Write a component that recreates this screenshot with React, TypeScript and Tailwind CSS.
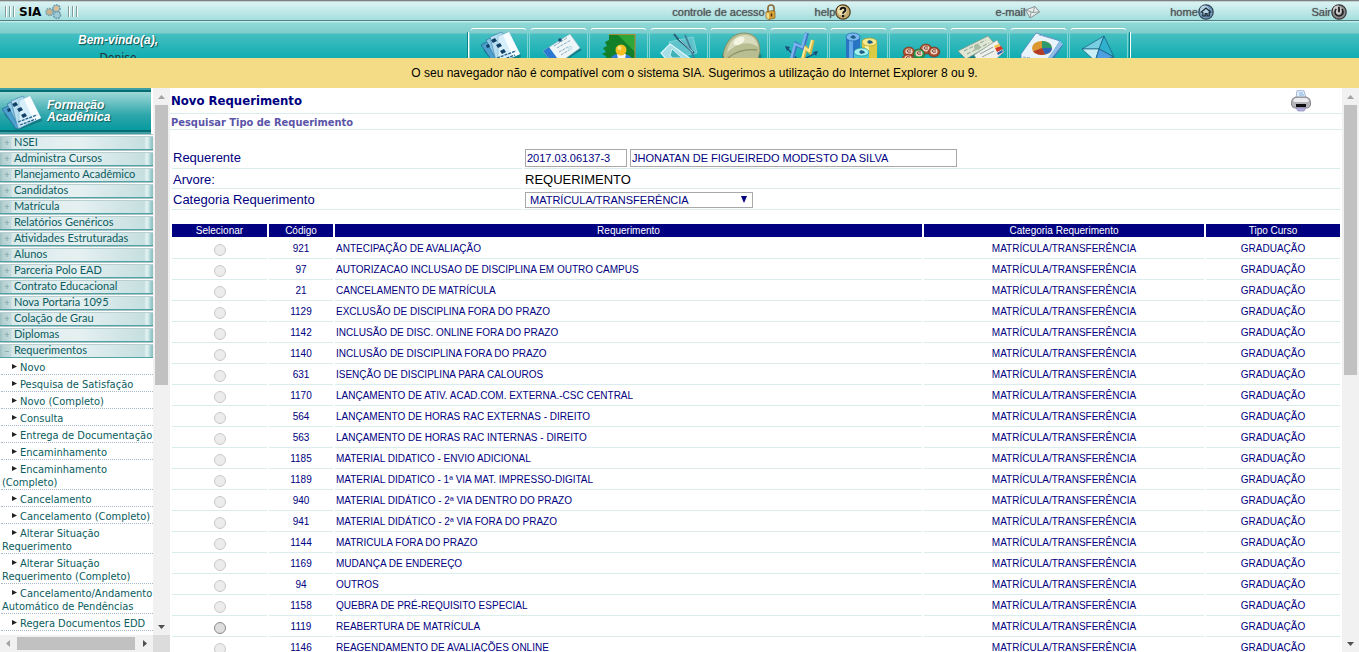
import React from "react";

const MODULES = [
  "Acadêmico",
  "Cadastro",
  "Docente",
  "Projetos",
  "Segurança",
  "Indicadores",
  "Dados",
  "Comunidade",
  "Financeiro",
  "Relatórios",
  "Geral",
];

const MENU = [
  "NSEI",
  "Administra Cursos",
  "Planejamento Acadêmico",
  "Candidatos",
  "Matrícula",
  "Relatórios Genéricos",
  "Atividades Estruturadas",
  "Alunos",
  "Parceria Polo EAD",
  "Contrato Educacional",
  "Nova Portaria 1095",
  "Colação de Grau",
  "Diplomas",
  "Requerimentos",
];

const SUBMENU = [
  "Novo",
  "Pesquisa de Satisfação",
  "Novo (Completo)",
  "Consulta",
  "Entrega de Documentação",
  "Encaminhamento",
  "Encaminhamento (Completo)",
  "Cancelamento",
  "Cancelamento (Completo)",
  "Alterar Situação Requerimento",
  "Alterar Situação Requerimento (Completo)",
  "Cancelamento/Andamento Automático de Pendências",
  "Regera Documentos EDD",
];

const ROWS: { code: string; name: string; enabled?: boolean }[] = [
  { code: "921", name: "ANTECIPAÇÃO DE AVALIAÇÃO" },
  { code: "97", name: "AUTORIZACAO INCLUSAO DE DISCIPLINA EM OUTRO CAMPUS" },
  { code: "21", name: "CANCELAMENTO DE MATRÍCULA" },
  { code: "1129", name: "EXCLUSÃO DE DISCIPLINA FORA DO PRAZO" },
  { code: "1142", name: "INCLUSÃO DE DISC. ONLINE FORA DO PRAZO" },
  { code: "1140", name: "INCLUSÃO DE DISCIPLINA FORA DO PRAZO" },
  { code: "631", name: "ISENÇÃO DE DISCIPLINA PARA CALOUROS" },
  { code: "1170", name: "LANÇAMENTO DE ATIV. ACAD.COM. EXTERNA.-CSC CENTRAL" },
  { code: "564", name: "LANÇAMENTO DE HORAS RAC EXTERNAS - DIREITO" },
  { code: "563", name: "LANÇAMENTO DE HORAS RAC INTERNAS - DIREITO" },
  { code: "1185", name: "MATERIAL DIDATICO - ENVIO ADICIONAL" },
  { code: "1189", name: "MATERIAL DIDATICO - 1ª VIA MAT. IMPRESSO-DIGITAL" },
  { code: "940", name: "MATERIAL DIDÁTICO - 2ª VIA DENTRO DO PRAZO" },
  { code: "941", name: "MATERIAL DIDÁTICO - 2ª VIA FORA DO PRAZO" },
  { code: "1144", name: "MATRICULA FORA DO PRAZO" },
  { code: "1169", name: "MUDANÇA DE ENDEREÇO" },
  { code: "94", name: "OUTROS" },
  { code: "1158", name: "QUEBRA DE PRÉ-REQUISITO ESPECIAL" },
  { code: "1119", name: "REABERTURA DE MATRÍCULA", enabled: true },
  { code: "1146", name: "REAGENDAMENTO DE AVALIAÇÕES ONLINE" },
];

function CardsArt() {
  return (
    <g>
      <path d="M14 22L28 38 52 29 51 25z" fill="#0b5560" opacity=".5" />
      <polygon points="12,17 22,12 36,33 26,37" fill="#4d9fcd" stroke="#1f5f8c" strokeWidth=".7" />
      <polygon points="17,12 28,7 42,28 29,36" fill="#8fc9e6" stroke="#2f749f" strokeWidth=".7" />
      <polygon points="21,9 33,4 47,27 28,37" fill="#b8def0" stroke="#3f86b0" strokeWidth=".7" />
      <polygon points="29,8 40,4 51,26 29,36" fill="#d6eefa" stroke="#69acce" strokeWidth=".5" />
      <polygon points="34,7 40,4 51,26 44,29" fill="#f8fdff" />
      <path d="M22 12l4-2 2 3-4 2zM27 17l4-2 2 3-4 2zM31 23l4-2 2 3-4 2zM17 17l3-1 1 3-3 1z" fill="#123f66" />
      <path d="M28 30l19-7M30 33l16-6" stroke="#1f5f8c" strokeWidth="1.300" strokeDasharray="3 1" />
    </g>
  );
}

function ModuleArt({ index }: { index: number }) {
  switch (index) {
    case 0:
      return <CardsArt />;
    case 1:
      return (
        <g>
          <polygon points="16,27 28,38 53,22 51,20" fill="#0b5560" opacity=".5" />
          <polygon points="14,23 41,6 51,20 26,38" fill="#eef6fa" stroke="#9fb9c6" strokeWidth=".6" />
          <polygon points="14,23 20,19 31,34 26,38" fill="#2b78d0" />
          <path d="M25 18l13-8M28 20l14-8M30 24l9-5M32 27l8-5" stroke="#8ba9bb" strokeWidth="1" strokeDasharray="3 1" />
          <circle cx="31" cy="12" r="1.800" fill="#1d4a70" />
          <circle cx="41" cy="20" r="2.500" fill="#cfe6ea" />
        </g>
      );
    case 2:
      return (
        <g>
          <path d="M20 6H46V31H14l4-2-5-3 4-2-3-4 4-2-2-4 4-2z" fill="#128028" />
          <path d="M28 6H46V24z" fill="#2fa638" />
          <path d="M20 6.500H46V31" fill="none" stroke="#a58a3a" strokeWidth="1.200" />
          <path d="M21 32q2-6 8-6h7q6 1 8 6z" fill="#2f7cd8" />
          <path d="M28 26h9l-1 5h-7z" fill="#f4f6f8" />
          <circle cx="32" cy="22" r="5.500" fill="#f3bf23" />
          <circle cx="30.500" cy="20" r="2" fill="#ffe88a" />
        </g>
      );
    case 3:
      return (
        <g>
          <polygon points="20,14 44,9 48,25 26,30" fill="#5fc3cc" stroke="#a5dfe6" strokeWidth=".6" />
          <path d="M12 25L21 16 42 31H17z" fill="#a8dfe6" stroke="#e2f8fb" strokeWidth="1.100" />
          <path d="M21 27l2-6 10 9H23z" fill="#3fb2b8" stroke="#e5f8fa" strokeWidth=".8" />
          <path d="M25 6l4 5 16 14" fill="none" stroke="#2a5e74" strokeWidth="2" />
          <path d="M36 7l5 12 4 11" fill="none" stroke="#3f7f9a" strokeWidth="1.800" />
          <path d="M30 11l14 13" stroke="#a9dce8" strokeWidth="1" />
        </g>
      );
    case 4:
      return (
        <g>
          <ellipse cx="33" cy="28" rx="20" ry="6" fill="#35604c" opacity=".5" />
          <path d="M14 27C16 15 23 5 35 5s16 9 16 18l-2 8H15z" fill="#b9bd92" stroke="#7d825a" strokeWidth=".7" />
          <path d="M18 25C20 12 28 7 36 7s12 5 13 12c-8-6-21-5-31 6z" fill="#d9dbbd" />
          <ellipse cx="30" cy="13" rx="6" ry="3.500" fill="#f4f4e2" transform="rotate(-30 30 13)" />
          <path d="M19 30q12-10 29-8" fill="none" stroke="#8f9468" strokeWidth="1.300" />
        </g>
      );
    case 5:
      return (
        <g>
          <path d="M18 20l11 12M47 25L33 32" stroke="#194a78" strokeWidth="1.200" />
          <path d="M16 18l5 1-3 4zM49 23l-5 1 3 4z" fill="#194a78" />
          <path d="M23 31L27 16 34 20 38 5" fill="none" stroke="#3d78c4" strokeWidth="4" />
          <path d="M22 31L26 16 33 19 37 5" fill="none" stroke="#79b4ee" strokeWidth="2.400" />
          <path d="M34 31L37 20 41 24 44 12" fill="none" stroke="#d6b743" strokeWidth="3.500" />
          <path d="M33 31L36 20 40 23 43 12" fill="none" stroke="#f8ea94" strokeWidth="2" />
        </g>
      );
    case 6:
      return (
        <g>
          <path d="M17 9v22h14V9z" fill="#2873c4" />
          <path d="M20 11v20h4V11z" fill="#64a9e8" />
          <ellipse cx="24" cy="9" rx="7" ry="4" fill="#79baf0" stroke="#1f61aa" strokeWidth=".7" />
          <path d="M33 14v17h15V14z" fill="#dcca45" />
          <path d="M36 16v15h4V16z" fill="#fff3a0" />
          <ellipse cx="40.500" cy="14" rx="7.500" ry="4" fill="#f6ea8c" stroke="#aa9a24" strokeWidth=".7" />
          <path d="M25 24v8h15v-8z" fill="#45c8cc" />
          <ellipse cx="32.500" cy="24" rx="7.500" ry="4" fill="#a6f0ee" stroke="#168f98" strokeWidth=".7" />
          <path d="M21 9l3-2 2 1 1 2-3 1zM38 14l2-2 3 1 1 2-4 1zM30 24l2-2 3 1 1 2-4 1z" fill="#225f86" />
        </g>
      );
    case 7:
      return (
        <g fill="none">
          {[
            [20, 24, "#b5522f"],
            [37, 21, "#b5522f"],
            [45, 24, "#a8492a"],
            [19, 31, "#b5522f"],
            [30, 26, "#1f9a4a"],
          ].map(([x, y, c], i) => (
            <g key={i}>
              <ellipse cx={x} cy={y} rx="5.800" ry="5" fill={c as string} stroke="#6d3320" strokeWidth=".6" />
              <ellipse cx={x} cy={Number(y) - 0.5} rx="3.600" ry="3" fill="#f0d3c4" />
              <path d={`M${Number(x) + 2} ${Number(y) - 2}q-4-1-4 1t4 1`} stroke="#7f4630" strokeWidth="1" />
            </g>
          ))}
        </g>
      );
    case 8:
      return (
        <g>
          <polygon points="11,27 25,32 54,27 50,22" fill="#0b5560" opacity=".5" />
          <polygon points="9,23 39,8 45,15 17,31" fill="#dfe6d4" stroke="#7f9483" strokeWidth=".7" />
          <path d="M15 23l22-11M18 26l22-11" stroke="#8ba08c" strokeWidth="1" strokeDasharray="4 2" />
          <circle cx="28" cy="19" r="3" fill="#a9bca4" />
          <polygon points="25,27 48,12 55,24 46,32 28,32" fill="#eff1ea" stroke="#8a9b98" strokeWidth=".7" />
          <path d="M31 26l13-7M33 29l12-6" stroke="#8fa0a8" strokeWidth="1" />
          <path d="M46 20l6-2 2 3-6 3z" fill="#d03a2a" />
          <path d="M45 18l5-2 1 2-5 2z" fill="#f0c23a" />
          <path d="M48 25l5-3 1 2-5 3z" fill="#2f60b0" />
        </g>
      );
    case 9:
      return (
        <g>
          <polygon points="12,28 30,8 54,17 44,32" fill="#3f7fc0" />
          <polygon points="12,26 27,5 51,13 39,32 12,31" fill="#e9f3fb" stroke="#4b87c2" strokeWidth=".8" />
          <path d="M51 13l3 3-12 15h-4z" fill="#8fbce6" />
          <ellipse cx="33" cy="20" rx="10" ry="7" fill="#dc9730" />
          <path d="M33 20V13a10 7 0 0 1 10 7z" fill="#2c9a6c" />
          <path d="M33 20h10a10 7 0 0 1-7 6.600z" fill="#2f62b6" />
          <path d="M33 20l3 6.600a10 7 0 0 1-12-3z" fill="#b23a28" />
          <path d="M30 7l14 4M14 29l8 1" stroke="#88a9c6" strokeWidth="1" strokeDasharray="3 1" />
        </g>
      );
    default:
      return (
        <g stroke="#155b7c" strokeWidth=".7">
          <polygon points="13,21 35,8 30,21" fill="#79cfe2" />
          <polygon points="35,8 45,29 30,21" fill="#2fb0cc" />
          <polygon points="13,21 30,21 26,33" fill="#c8eef6" />
          <polygon points="30,21 45,29 26,34" fill="#4c9fe0" />
        </g>
      );
  }
}

function GearsIcon() {
  return (
    <svg className="h-4 w-[17px]" viewBox="0 0 17 16" aria-hidden="true">
      <circle cx="4.500" cy="8" r="3.500" fill="#c8b490" />
      <circle cx="4.500" cy="8" r="3.500" fill="none" stroke="#6fa3b4" strokeWidth="1.600" strokeDasharray="1.800 .8" />
      <circle cx="11.500" cy="4.500" r="3.500" fill="#d9bf9c" />
      <circle cx="11.500" cy="4.500" r="3.500" fill="none" stroke="#5f9bb4" strokeWidth="1.600" strokeDasharray="1.800 .8" />
      <circle cx="12" cy="11" r="3.500" fill="#9fcad6" />
      <circle cx="12" cy="11" r="3.500" fill="none" stroke="#6a99a8" strokeWidth="1.600" strokeDasharray="1.800 .8" />
    </svg>
  );
}

function LockIcon() {
  return (
    <svg className="h-4 w-[11px]" viewBox="0 0 11 16" aria-hidden="true">
      <path d="M3 8V4q0-3 3-3t3 3v4" fill="none" stroke="#8a6a3a" strokeWidth="1.700" />
      <path d="M1 8l7-1.500 2 1V14l-6 1.500L1 14z" fill="#d9a63a" stroke="#80561a" strokeWidth=".7" />
      <path d="M1.500 8.500L4 9.500V15L1.500 14z" fill="#f4dc8a" />
      <path d="M6.500 9.500v3" stroke="#4a2d0a" strokeWidth="1.500" />
    </svg>
  );
}

function HelpIcon() {
  return (
    <svg className="size-4" viewBox="0 0 16 16" aria-hidden="true">
      <circle cx="8" cy="8" r="7.200" fill="#c6ac72" stroke="#4b3b1c" strokeWidth="1.200" />
      <circle cx="7" cy="6.500" r="4.800" fill="#eddfae" />
      <path d="M5.600 6Q5.700 3.700 8 3.700T10.400 6Q10.400 7.200 9 7.900 8.100 8.400 8.100 9.700" fill="none" stroke="#111" strokeWidth="1.900" />
      <circle cx="8.100" cy="12" r="1.200" fill="#111" />
    </svg>
  );
}

function MailIcon() {
  return (
    <svg className="h-4 w-[15px]" viewBox="0 0 15 16" aria-hidden="true">
      <path d="M.500 6L10 2.500 14.500 8 5 14z" fill="#e9eceb" stroke="#7f8a8c" strokeWidth=".9" />
      <path d="M.500 6L8 8.500 10 2.500M5 14l1-6M14.500 8L8 8.500" fill="none" stroke="#8b9698" strokeWidth=".9" />
    </svg>
  );
}

function HomeIcon() {
  return (
    <svg className="size-4" viewBox="0 0 16 16" aria-hidden="true">
      <circle cx="8" cy="8" r="7.200" fill="#6f98b6" stroke="#2e4254" strokeWidth="1.200" />
      <circle cx="6.500" cy="6" r="4.500" fill="#b7d4e6" />
      <path d="M2.800 8.500L8 4l5.200 4.500M4.800 8v4h2.400V9.500h1.800V12h2.300V8" fill="none" stroke="#1c2832" strokeWidth="1.200" />
    </svg>
  );
}

function PowerIcon() {
  return (
    <svg className="size-4" viewBox="0 0 16 16" aria-hidden="true">
      <circle cx="8" cy="8" r="7.200" fill="#8b8b8b" stroke="#333" strokeWidth="1.200" />
      <circle cx="6.500" cy="6" r="4.500" fill="#c9c9c9" />
      <path d="M5.300 5a4 4 0 1 0 5.400 0" fill="none" stroke="#1b1b1b" strokeWidth="1.600" />
      <path d="M8 2.800v5.400" stroke="#1b1b1b" strokeWidth="1.800" />
    </svg>
  );
}

function PrinterIcon() {
  return (
    <svg className="h-[22px] w-5" viewBox="0 0 20 22" aria-hidden="true">
      <path d="M5 8L6 .700h7L15 8z" fill="#e6f0fc" stroke="#8fa6c8" strokeWidth=".8" />
      <path d="M8 3h4M8 5h5" stroke="#7fb0e8" />
      <path d="M.500 12q0-4 4-5h11q4 1 4 5v3q-1 3-3 3h-13q-2 0-3-3z" fill="#b4b4b8" stroke="#77777c" strokeWidth=".8" />
      <path d="M2 11q1-3 4-3h8q3 0 4 3l-2 1H4z" fill="#ececf0" />
      <path d="M5 14h10v3H5z" fill="#0c0c0e" />
      <path d="M5 18h10l-2 3H7z" fill="#b4b2e0" stroke="#7f7db4" strokeWidth=".6" />
    </svg>
  );
}

function Grip() {
  return (
    <span className="flex gap-[2px]" aria-hidden="true">
      <span className="h-[11px] w-[2px] border-l border-[#7f9a9c] bg-white" />
      <span className="h-[11px] w-[2px] border-l border-[#7f9a9c] bg-white" />
      <span className="h-[11px] w-[2px] border-l border-[#7f9a9c] bg-white" />
    </span>
  );
}

function TopLink({ label, icon, end }: { label: string; icon: React.ReactNode; end?: boolean }) {
  return (
    <a
      href="#"
      className={`flex items-center ${end ? "justify-end pr-3" : "justify-center"} text-[11px] leading-4 text-[#54595b] [text-shadow:0_0_1px_#54595b]`}
    >
      {label}
      {icon}
    </a>
  );
}

function VerticalScrollbar({ thumb }: { thumb: string }) {
  return (
    <div className="flex w-[17px] shrink-0 flex-col items-center bg-[#f1f1f1]" aria-hidden="true">
      <svg className="size-[17px] shrink-0" viewBox="0 0 17 17">
        <path d="M5 11l3.500-4 3.500 4z" fill="#a3a3a3" />
      </svg>
      <div className={`w-[13px] bg-[#c1c1c1] ${thumb}`} />
      <div className="grow" />
      <svg className="size-[17px] shrink-0" viewBox="0 0 17 17">
        <path d="M5 7h7l-3.500 4z" fill="#505050" />
      </svg>
    </div>
  );
}

const rowLine = "border-b border-[#d9eeec]";
const cell = "border-b border-[#d9eeec] p-0 pt-[2px] leading-[18px]";

export default function App() {
  return (
    <div className="flex h-screen flex-col overflow-hidden bg-white font-['Liberation_Sans',Arial,sans-serif]">
      <header className="shrink-0">
        <div className="grid h-[21px] grid-cols-[1fr_120px_98px_272px_76px_129px] border-t border-b border-t-[#808080] border-b-[#4f7f80] bg-linear-to-b from-[#dff3f3] to-[#a5dfdf] pt-[2px] shadow-[inset_0_1px_0_#b9d2d2]">
          <div className="flex items-center gap-1 pl-[5px]">
            <Grip />
            <strong className="font-['DejaVu_Sans',Verdana,sans-serif] text-[12px] leading-4 font-bold text-black">SIA</strong>
            <GearsIcon />
            <span className="pl-[2px]">
              <Grip />
            </span>
          </div>
          <TopLink label="controle de acesso" icon={<LockIcon />} />
          <TopLink label="help" icon={<HelpIcon />} />
          <TopLink label="e-mail" icon={<MailIcon />} />
          <TopLink label="home" icon={<HomeIcon />} />
          <TopLink label="Sair" icon={<PowerIcon />} end />
        </div>

        <div className="flex h-[37px] justify-between overflow-hidden bg-[linear-gradient(to_bottom,#d8f3f2_0,#8edad8_2px,#82cccb_12px,#45bfc1_13px,#10adb1_37px)]">
          <div className="w-[236px] pt-3 text-center">
            <p className="text-[12px] leading-[15px] font-bold text-white italic [text-shadow:1px_1px_1px_#0a4a4c]">Bem-vindo(a),</p>
            <p className="pt-[2px] font-['DejaVu_Sans_Condensed','DejaVu_Sans',Tahoma,sans-serif] text-[12px] leading-4 text-[#1f3133]">
              Denise
            </p>
          </div>
          <nav className="mr-[228px] flex pt-[7px]" aria-label="Módulos">
            <span className="mt-1 w-[2px] border-l border-[#0a8487] bg-white" />
            {MODULES.map((name, i) => (
              <a
                key={name}
                href="#"
                aria-label={name}
                className="mr-px block h-[34px] w-[59px] rounded-t-[5px] border-x border-t border-x-[#7ed3d3] border-t-white"
              >
                <svg className="h-[30px] w-[57px]" viewBox="1 1 57 30" aria-hidden="true">
                  <ModuleArt index={i} />
                </svg>
              </a>
            ))}
            <span className="mt-1 w-[2px] border-l border-[#0a8487] bg-white" />
          </nav>
        </div>

        <p className="h-[30px] bg-[#f4dc86] pl-[30px] text-center text-[12px] leading-[30px] text-black">
          O seu navegador não é compatível com o sistema SIA. Sugerimos a utilização do Internet Explorer 8 ou 9.
        </p>
      </header>

      <div className="flex min-h-0 grow">
        <aside className="flex w-[170px] shrink-0 flex-col">
          <div className="flex min-h-0 grow">
            <div className="w-[153px] shrink-0 overflow-hidden">
              <div className="mr-[2px] h-[46px] border-t-2 border-b-2 border-t-[#3f9ea2] border-b-[#3f9ea2]">
                <div className="flex h-[42px] items-center border-t-2 border-b-2 border-[#066d74] bg-[linear-gradient(to_bottom,#9fd8d8,#2fa7ab_60%,#069a9f)]">
                  <svg className="mt-1 h-[36px] w-[47px] shrink-0" viewBox="10 3 47 36" aria-hidden="true">
                    <CardsArt />
                  </svg>
                  <h2 className="text-[12px] leading-3 font-bold text-white italic [text-shadow:1px_1px_1px_#0a5a5e]">
                    Formação
                    <br />
                    Acadêmica
                  </h2>
                </div>
              </div>

              <nav aria-label="Menu">
                <ul className="font-[Lato,'Trebuchet_MS',sans-serif] text-[11px] text-[#0a5c60]">
                  {MENU.map((item) => (
                    <li key={item}>
                      <a
                        href="#"
                        className="flex h-4 items-center border-t border-b border-t-[#a9c4c6] border-b-[#4fa3a5] bg-[linear-gradient(to_right,#9dbfc2_0,#b4d0d2_3px,#c3dbdc_11px,#d9e9ea_12px,#e6f0f1_50%,#c6dfe0_144px,#e6f3f3_147px,#8fc3c4_152px)] leading-[14px] shadow-[inset_0_1px_0_#ffffff,inset_0_2px_0_#b9cfd0]"
                      >
                        <span className="w-[14px] shrink-0 pl-1 text-[10px] text-[#7fa0a3]" aria-hidden="true">
                          {item === "Requerimentos" ? "–" : "+"}
                        </span>
                        {item}
                      </a>
                    </li>
                  ))}
                </ul>
                <ul className="ml-px font-['DejaVu_Sans_Condensed','DejaVu_Sans',Tahoma,sans-serif] text-[11px] leading-[13px] text-[#0a5c60]">
                  {SUBMENU.map((item) => (
                    <li key={item} className="border-b border-dotted border-[#a9b6cc] pt-[3px] pl-px">
                      <a href="#" className="block">
                        <svg className="mr-[3px] ml-[10px] inline h-[7px] w-[5px] align-[1px]" viewBox="0 0 5 7" aria-hidden="true">
                          <path d="M0 1l5 2.500L0 6z" fill="#222" />
                        </svg>
                        {item}
                      </a>
                    </li>
                  ))}
                </ul>
              </nav>
            </div>
            <VerticalScrollbar thumb="h-[280px]" />
          </div>
          <div className="flex h-[17px] shrink-0 bg-[#dcdcdc]" aria-hidden="true">
            <div className="flex w-[153px] items-center bg-[#f1f1f1]">
              <svg className="size-[17px]" viewBox="0 0 17 17">
                <path d="M10 5v7L6 8.500z" fill="#a3a3a3" />
              </svg>
              <div className="h-[13px] w-[118px] bg-[#c1c1c1]" />
              <svg className="size-[17px]" viewBox="0 0 17 17">
                <path d="M8 5v7l4-3.500z" fill="#505050" />
              </svg>
            </div>
          </div>
        </aside>

        <main className="min-w-0 grow overflow-hidden text-[#000080]">
          <div className="flex h-[26px] items-center justify-between border-b border-[#d9eeec] pr-[31px] pl-px">
            <h1 className="font-['DejaVu_Sans_Condensed','DejaVu_Sans',Tahoma,sans-serif] text-[13px] leading-4 font-bold">Novo Requerimento</h1>
            <button type="button" aria-label="Imprimir">
              <PrinterIcon />
            </button>
          </div>
          <h2 className="h-4 border-b border-[#d9eeec] pl-px font-['DejaVu_Sans_Condensed','DejaVu_Sans',Tahoma,sans-serif] text-[11px] leading-[17px] font-bold text-[#5a55a8]">
            Pesquisar Tipo de Requerimento
          </h2>

          <form className="mx-[2px] mt-[17px] grid grid-cols-[350px_1fr] grid-rows-[22px_20px_21px] gap-x-[2px] text-[13px]">
            <label htmlFor="matricula" className={`${rowLine} pl-px leading-[22px]`}>
              Requerente
            </label>
            <div className={`${rowLine} flex items-center gap-[3px] pl-px`}>
              <input
                id="matricula"
                readOnly
                defaultValue="2017.03.06137-3"
                className="h-[18px] w-[102px] border border-[#a9a9a9] px-px text-[11px]"
              />
              <input
                aria-label="Nome do requerente"
                readOnly
                defaultValue="JHONATAN DE FIGUEIREDO MODESTO DA SILVA"
                className="h-[18px] w-[327px] border border-[#a9a9a9] px-px text-[11px]"
              />
            </div>
            <span className={`${rowLine} pl-px leading-[22px]`}>Arvore:</span>
            <span className={`${rowLine} pl-px leading-[22px] text-black`}>REQUERIMENTO</span>
            <label htmlFor="categoria" className={`${rowLine} pl-px leading-[22px]`}>
              Categoria Requerimento
            </label>
            <div className={`${rowLine} flex items-end pb-px pl-px`}>
              <div className="relative flex">
                <select
                  id="categoria"
                  className="h-4 w-[228px] appearance-none border border-[#a9a9a9] bg-white pl-1 text-[11px] leading-[14px]"
                >
                  <option>MATRÍCULA/TRANSFERÊNCIA</option>
                </select>
                <svg className="pointer-events-none absolute top-1 right-[6px] h-[7px] w-[6px]" viewBox="0 0 6 7" aria-hidden="true">
                  <path d="M0 0h6L3 7z" fill="#000080" />
                </svg>
              </div>
            </div>
          </form>

          <table className="mt-[14px] w-full table-fixed border-separate border-spacing-x-[2px] border-spacing-y-0 text-center text-[10px]">
            <colgroup>
              <col className="w-[95px]" />
              <col className="w-[64px]" />
              <col />
              <col className="w-[280px]" />
              <col className="w-[134px]" />
            </colgroup>
            <thead>
              <tr>
                {["Selecionar", "Código", "Requerimento", "Categoria Requerimento", "Tipo Curso"].map((h) => (
                  <th key={h} scope="col" className="border-b border-white bg-[#000080] p-0 leading-[13px] font-normal text-white">
                    {h}
                  </th>
                ))}
              </tr>
            </thead>
            <tbody>
              {ROWS.map((row) => (
                <tr key={row.code}>
                  <td className={`${rowLine} p-0`}>
                    <input
                      type="radio"
                      name="requerimento"
                      aria-label={row.name}
                      disabled={!row.enabled}
                      className="mx-auto mt-1 block size-3 appearance-none rounded-full border border-[#8a8a8a] bg-[#dedede] disabled:border-[#c9c9c9] disabled:bg-[#ececec]"
                    />
                  </td>
                  <td className={cell}>{row.code}</td>
                  <td className={`${cell} text-left`}>
                    <span className="pl-px">{row.name}</span>
                  </td>
                  <td className={cell}>MATRÍCULA/TRANSFERÊNCIA</td>
                  <td className={cell}>GRADUAÇÃO</td>
                </tr>
              ))}
            </tbody>
          </table>
        </main>
        <VerticalScrollbar thumb="h-[270px]" />
      </div>
    </div>
  );
}
